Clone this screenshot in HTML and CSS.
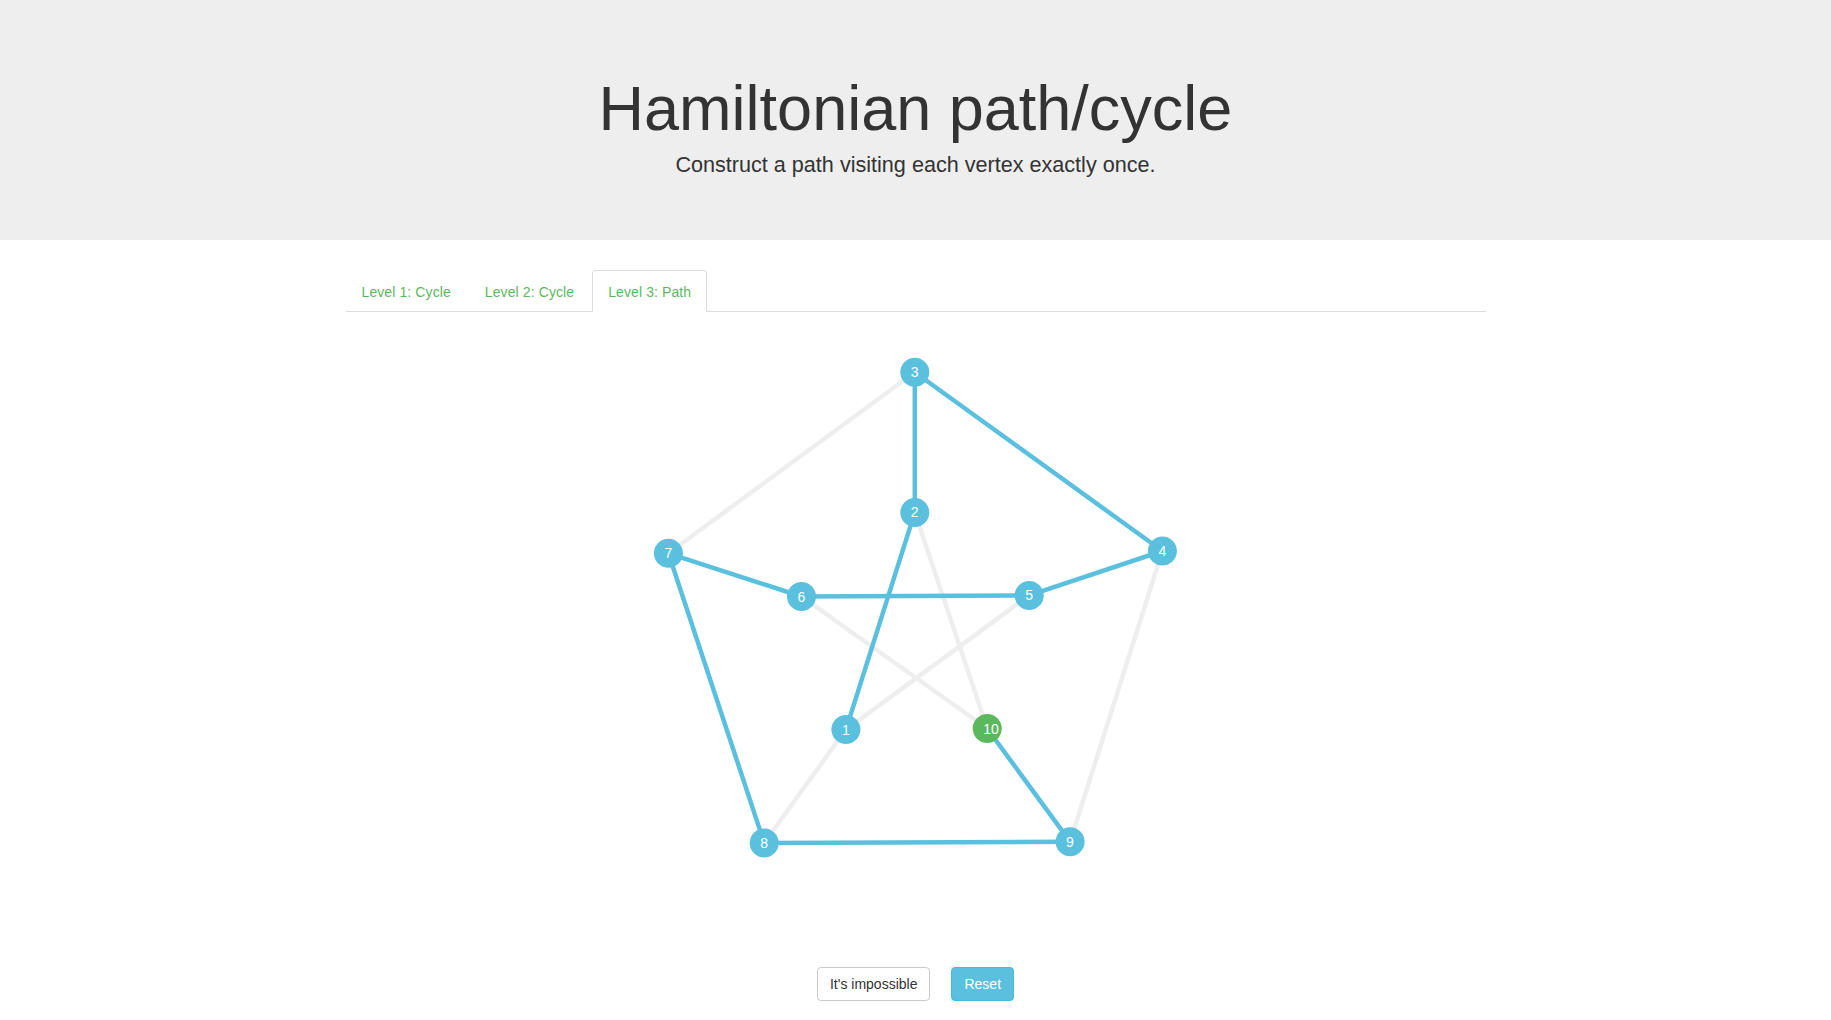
FILE: index.html
```html
<!DOCTYPE html>
<html lang="en">
<head>
<meta charset="utf-8">
<title>Hamiltonian path/cycle</title>
<link rel="stylesheet" href="styles.css">
</head>
<body>
<div class="jumbotron">
  <h1>Hamiltonian path/cycle</h1>
  <p>Construct a path visiting each vertex exactly once.</p>
</div>
<div class="container">
  <ul class="nav-tabs">
    <li><a href="#">Level 1: Cycle</a></li>
    <li><a href="#">Level 2: Cycle</a></li>
    <li class="active"><a href="#">Level 3: Path</a></li>
  </ul>
  <svg class="graph" width="1140" height="635" viewBox="0 0 1140 635">
    <g class="edges">
      <line class="edge off" x1="568.8" y1="60.3" x2="322.4" y2="241.3"/>
      <line class="edge off" x1="816.4" y1="239" x2="724.1" y2="529.7"/>
      <line class="edge off" x1="418.2" y1="530.9" x2="499.9" y2="417.6"/>
      <line class="edge off" x1="568.8" y1="200.4" x2="641.2" y2="416.5"/>
      <line class="edge off" x1="455.5" y1="284.5" x2="641.2" y2="416.5"/>
      <line class="edge off" x1="683.2" y1="283.4" x2="499.9" y2="417.6"/>
      <line class="edge on" x1="568.8" y1="60.3" x2="816.4" y2="239"/>
      <line class="edge on" x1="724.1" y1="529.7" x2="418.2" y2="530.9"/>
      <line class="edge on" x1="418.2" y1="530.9" x2="322.4" y2="241.3"/>
      <line class="edge on" x1="568.8" y1="60.3" x2="568.8" y2="200.4"/>
      <line class="edge on" x1="816.4" y1="239" x2="683.2" y2="283.4"/>
      <line class="edge on" x1="724.1" y1="529.7" x2="641.2" y2="416.5"/>
      <line class="edge on" x1="322.4" y1="241.3" x2="455.5" y2="284.5"/>
      <line class="edge on" x1="568.8" y1="200.4" x2="499.9" y2="417.6"/>
      <line class="edge on" x1="455.5" y1="284.5" x2="683.2" y2="283.4"/>
    </g>
    <g class="nodes">
      <g class="node"><circle cx="499.9" cy="417.6" r="14.5"/><text x="495.9" y="422.6">1</text></g>
      <g class="node"><circle cx="568.8" cy="200.4" r="14.5"/><text x="564.8" y="205.4">2</text></g>
      <g class="node"><circle cx="568.8" cy="60.3" r="14.5"/><text x="564.8" y="65.3">3</text></g>
      <g class="node"><circle cx="816.4" cy="239" r="14.5"/><text x="812.4" y="244">4</text></g>
      <g class="node"><circle cx="683.2" cy="283.4" r="14.5"/><text x="679.2" y="288.4">5</text></g>
      <g class="node"><circle cx="455.5" cy="284.5" r="14.5"/><text x="451.5" y="289.5">6</text></g>
      <g class="node"><circle cx="322.4" cy="241.3" r="14.5"/><text x="318.4" y="246.3">7</text></g>
      <g class="node"><circle cx="418.2" cy="530.9" r="14.5"/><text x="414.2" y="535.9">8</text></g>
      <g class="node"><circle cx="724.1" cy="529.7" r="14.5"/><text x="720.1" y="534.7">9</text></g>
      <g class="node current"><circle cx="641.2" cy="416.5" r="14.5"/><text x="637.2" y="421.5">10</text></g>
    </g>
  </svg>
  <div class="actions">
    <button class="btn btn-default" type="button">It's impossible</button>
    <button class="btn btn-info" type="button">Reset</button>
  </div>
</div>
</body>
</html>
```

FILE: styles.css
```css
* {
  box-sizing: border-box;
}

html, body {
  margin: 0;
  padding: 0;
}

body {
  font-family: "Liberation Sans", Arial, Helvetica, sans-serif;
  font-size: 14px;
  line-height: 1.42857;
  color: #333;
  background: #fff;
}

.jumbotron {
  background: #eee;
  padding: 48px 15px 45px;
  margin-bottom: 30px;
  text-align: center;
}

.jumbotron h1 {
  margin: 26.2px 0 6.5px;
  font-size: 63px;
  font-weight: 500;
  line-height: 69.3px;
  color: #333;
}

.jumbotron p {
  margin: 0 0 15px;
  font-size: 21.6px;
  font-weight: 200;
  line-height: 30px;
}

.container {
  width: 1170px;
  margin: 0 auto;
  padding: 0 15px;
}

.nav-tabs {
  display: flex;
  list-style: none;
  margin: 0;
  padding: 0;
  border-bottom: 1px solid #ddd;
}

.nav-tabs li {
  margin-bottom: -1px;
}

.nav-tabs a {
  display: block;
  padding: 11px 15px 9px;
  margin-right: 2px;
  line-height: 20px;
  letter-spacing: 0.1px;
  border: 1px solid transparent;
  border-radius: 4px 4px 0 0;
  color: #5cb85c;
  text-decoration: none;
}

.nav-tabs .active a {
  border-color: #ddd;
  border-bottom-color: #fff;
  background: #fff;
}

.graph {
  display: block;
}

.edge {
  stroke-width: 4.5;
  stroke-linecap: round;
}

.edge.off {
  stroke: #eeeeee;
}

.edge.on {
  stroke: #5bc0de;
}

.node circle {
  fill: #5bc0de;
}

.node.current circle {
  fill: #5cb85c;
}

.node text {
  fill: #fff;
  font-family: "Liberation Sans", Arial, sans-serif;
  font-size: 14px;
}

.actions {
  display: flex;
  justify-content: center;
  gap: 21px;
  margin-top: 20px;
}

.btn {
  font-family: "Liberation Sans", Arial, sans-serif;
  font-size: 14px;
  line-height: 20px;
  padding: 6px 12px;
  border: 1px solid #ccc;
  border-radius: 4px;
  background: #fff;
  color: #333;
  cursor: pointer;
}

.btn-info {
  background: #5bc0de;
  border-color: #46b8da;
  color: #fff;
}
```
